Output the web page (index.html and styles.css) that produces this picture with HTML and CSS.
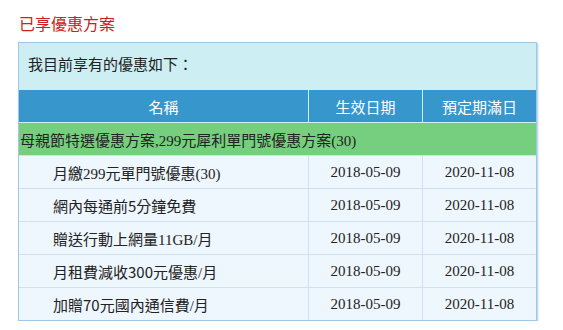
FILE: index.html
```html
<!DOCTYPE html>
<html lang="zh-Hant">
<head>
<meta charset="utf-8">
<title>已享優惠方案</title>
<link rel="stylesheet" href="styles.css">
</head>
<body>
<h2 class="title">已享優惠方案</h2>
<div class="box">
  <div class="intro">我目前享有的優惠如下：</div>
  <table class="plans">
    <colgroup>
      <col class="c-name"><col class="c-date"><col class="c-date">
    </colgroup>
    <thead>
      <tr><th>名稱</th><th class="sep">生效日期</th><th class="sep">預定期滿日</th></tr>
    </thead>
    <tbody>
      <tr class="group"><td colspan="3">母親節特選優惠方案,299元犀利單門號優惠方案(30)</td></tr>
      <tr><td class="name">月繳299元單門號優惠(30)</td><td class="date">2018-05-09</td><td class="date">2020-11-08</td></tr>
      <tr><td class="name">網內每通前<span class="sd">5</span>分鐘免費</td><td class="date">2018-05-09</td><td class="date">2020-11-08</td></tr>
      <tr><td class="name">贈送行動上網量11GB/月</td><td class="date">2018-05-09</td><td class="date">2020-11-08</td></tr>
      <tr><td class="name">月租費減收<span class="sd">300</span>元優惠/月</td><td class="date">2018-05-09</td><td class="date">2020-11-08</td></tr>
      <tr class="last"><td class="name">加贈<span class="sd">70</span>元國內通信費/月</td><td class="date">2018-05-09</td><td class="date">2020-11-08</td></tr>
    </tbody>
  </table>
</div>
</body>
</html>
```
FILE: styles.css
```css
html, body {
  margin: 0;
  padding: 0;
  background: #ffffff;
}
body {
  font-family: "Liberation Serif", "Noto Sans CJK TC", serif;
  font-size: 15px;
  color: #222222;
}
.title {
  margin: 0;
  padding: 12px 0 0 19px;
  height: 30px;
  line-height: 22px;
  font-size: 16px;
  font-weight: normal;
  color: #cc2020;
  font-family: "Noto Sans CJK TC", sans-serif;
}
.box {
  margin-left: 18px;
  width: 517px;
  background: #cdeef2;
  border: 1px solid #9fc7e6;
  box-shadow: 1px 1px 0 #c2dbef, 2px 2px 0 #e3eef8;
}
.intro {
  height: 47px;
  box-sizing: border-box;
  padding: 9px 0 0 9px;
  line-height: 24px;
  font-family: "Noto Sans CJK TC", sans-serif;
}
.plans {
  width: 517px;
  border-collapse: separate;
  border-spacing: 0;
  table-layout: fixed;
}
.c-name { width: 289px; }
.c-date { width: 114px; }
.plans th {
  height: 32px;
  padding: 0;
  background: #3797cd;
  color: #ffffff;
  font-weight: normal;
  font-family: "Noto Sans CJK TC", sans-serif;
  border-bottom: 1px solid #cdeef2;
}
.plans th.sep {
  border-left: 1px solid #cdeef2;
}
.plans td {
  height: 32px;
  padding: 0;
  background: #eef6fe;
  border-bottom: 1px solid #cfe1f1;
}
.plans .group td {
  background: #76cf7e;
  padding-left: 1px;
  border-bottom: 1px solid #cfe1f1;
}
.plans td.name {
  padding-left: 34px;
}
.plans td.date {
  text-align: center;
  border-left: 1px solid #cfe1f1;
}
.plans tr.last td {
  border-bottom: none;
}
.sd {
  font-family: "Noto Sans CJK TC", sans-serif;
}
```
